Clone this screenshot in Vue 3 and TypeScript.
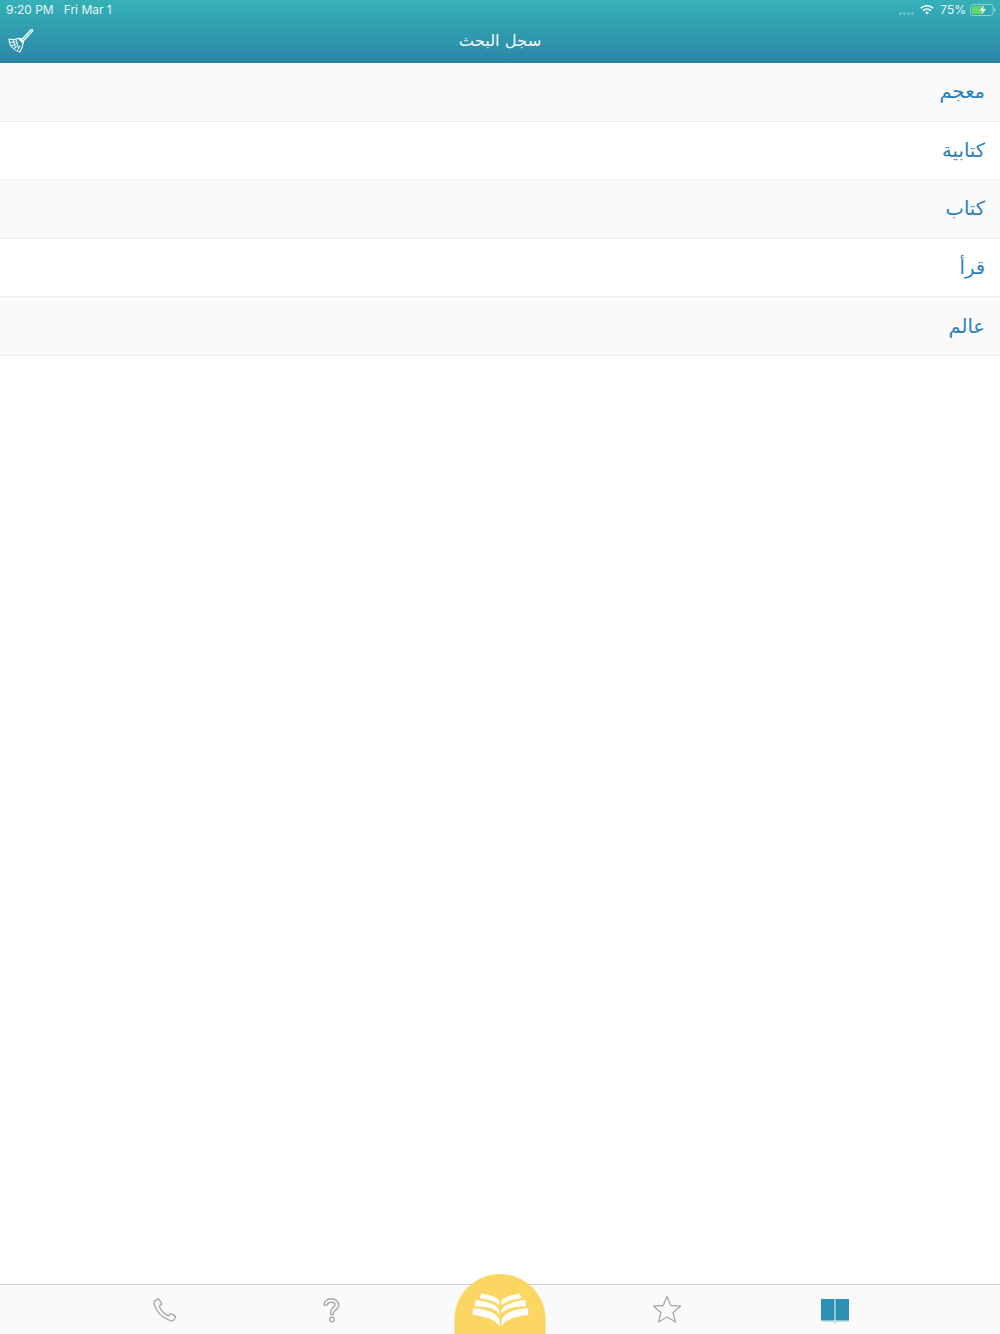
<script setup lang="ts">
const rows: string[] = ['معجم', 'كتابية', 'كتاب', 'قرأ', 'عالم']
</script>

<template>
  <div class="page">
    <header class="header">
      <div class="status">
        <div class="status-left"><span>9:20 PM</span><span>Fri Mar 1</span></div>
        <div class="status-right">
          <span class="signal"><i></i><i></i><i></i><i></i></span>
          <svg class="wifi" viewBox="0 0 16 12" width="14" height="11">
            <path d="M1 4.600a10 10 0 0 1 14 0" fill="none" stroke="#fff" stroke-width="1.900" />
            <path d="M3.600 7.200a6.400 6.400 0 0 1 8.800 0" fill="none" stroke="#fff" stroke-width="1.900" />
            <path d="M8 11.800 5.800 9.500a3.100 3.100 0 0 1 4.400 0z" fill="#fff" />
          </svg>
          <span class="pct">75%</span>
          <svg class="battery" viewBox="0 0 26 12" width="26" height="12">
            <rect x="0.500" y="0.500" width="22.500" height="11" rx="2.600" fill="none" stroke="#8fd0cb" stroke-width="1" />
            <rect x="2" y="2" width="11" height="8" rx="1" fill="#62d868" />
            <path d="M24 4v4c1 0 1.500-.9 1.500-2S25 4 24 4z" fill="#8fd0cb" />
            <path d="M14 1.200 9.800 6.800h2.800l-1 4L16 5h-2.900z" fill="#fff" />
          </svg>
        </div>
      </div>
      <div class="nav">
        <svg class="broom" viewBox="8 27 26 26" width="26" height="26" fill="none" stroke="#fff" stroke-width="1.100" stroke-linejoin="round" stroke-linecap="round">
          <path d="M21 40.500 30.800 30c.5-.5 1.200-.6 1.600-.2.400.4.300 1.100-.2 1.600L22.400 42" stroke-width="1.300" />
          <path d="M18.600 38.600c1.800-.6 3.800.9 4.800 3 .4.800.2 1.500-.2 1.800z" fill="#fff" />
          <path d="M18 38.400C15.500 39.500 12 39.800 9 39c.3 3.300 1 6 2.800 8 2 2.300 4.800 4 8 5 1.900-2.700 3-6 3.400-9.400" />
          <path d="M10.300 42.300c1.800.2 3.500 0 5-.7M11.500 45.300c2 0 3.600-.6 5-1.700M14 48.300c1.400-.5 2.900-1.600 3.800-3M17 50.500c1.200-.9 2.500-2.800 3-4.500M13 40l2.500 7.500M16 39.500l2.500 9" stroke-width="1" />
        </svg>
        <span class="title">سجل البحث</span>
      </div>
    </header>

    <main class="list">
      <div v-for="(row, i) in rows" :key="row" class="row" :class="{ odd: i % 2 === 0 }">{{ row }}</div>
    </main>

    <footer class="tabbar">
      <div class="tab phone">
        <svg viewBox="0 0 24 24" width="24" height="24" fill="none" stroke="#a8a8a8" stroke-width="1.400" stroke-linejoin="round">
          <path d="M2.300 2.600 4.700 1.100c.5-.3 1-.2 1.300.3l2.400 3.700c.3.500.2 1-.2 1.300L6.600 7.700c-.3.300-.4.600-.2 1 1.800 3.800 4.700 7 8.500 9 .4.200.8.100 1-.2l1.300-1.500c.4-.4.900-.5 1.400-.2l3.500 2.400c.5.300.5.900.2 1.300L21 21.600c-.9 1.100-2.300 1.500-3.700 1C8.500 19.500 3 13.500 1 5.300.8 4.300 1.400 3.200 2.300 2.600z" />
        </svg>
      </div>
      <div class="tab question">
        <svg viewBox="0 0 17 25" width="17" height="25" fill="none" stroke="#a8a8a8" stroke-width="1.400" stroke-linejoin="round">
          <path d="M1 7.300C1 3.500 4 .8 8.300.8c4.300 0 7.500 2.700 7.500 6.200 0 2.300-1.300 3.700-3 4.800-1.300.9-2.200 1.600-2.400 3.300l-.1 1.500H7.900l-.2-2.300c-.2-2.600 1-3.800 2.400-4.900 1.200-.9 2-1.500 2-2.700 0-1.500-1.600-2.500-3.700-2.500-2 0-3.800 1-4.300 2.800z" />
          <circle cx="9" cy="21.500" r="2.200" />
        </svg>
      </div>
      <div class="tab center">
        <div class="bump">
          <svg viewBox="0 0 58 34" width="58" height="34" fill="#fff">
            <path d="M9.700.5c6.500 1.200 14.500 2.300 18.300 7.500v4.500C24 8 16 6.500 8.300 5.300z" />
            <path d="M48.300.5C41.800 1.700 33.800 2.800 30 8v4.500C34 8 42 6.500 49.700 5.300z" />
            <path d="M4.300 7c8.500 1 19.500 2.800 23.700 10v4c-5-6.500-14-7.500-24.700-7.800z" />
            <path d="M53.700 7c-8.500 1-19.500 2.800-23.700 10v4c5-6.500 14-7.500 24.700-7.800z" />
            <path d="M1.300 15.300C13 15.800 24 18.500 28 26.500V33.700C24.500 26.500 13 22.800 1.300 22z" />
            <path d="M56.700 15.300C45 15.800 34 18.500 30 26.500V33.700C33.500 26.500 45 22.800 56.700 22z" />
          </svg>
        </div>
      </div>
      <div class="tab star">
        <svg viewBox="0 0 30 28" width="30" height="28" fill="none" stroke="#a8a8a8" stroke-width="1.300" stroke-linejoin="round">
          <path d="M15 1.500 18.800 10.500 28.500 11.200 21 17.500 23.500 27 15 22 6.500 27 9 17.500 1.500 11.200 11.200 10.500z" />
        </svg>
      </div>
      <div class="tab">
        <svg viewBox="0 0 30 26" width="30" height="26" fill="#2a91b3">
          <path d="M1 1h13.500v21.500H1z" />
          <path d="M15.500 1H29v21.500H15.500z" />
          <path d="M1 22.500h13l1 2.500 1-2.500h13v1H16.800l-1.800 2-1.800-2H1z" fill="#8cc8db" />
        </svg>
      </div>
    </footer>
  </div>
</template>

<style scoped>
.page {
  width: 1000px;
  height: 1334px;
  display: flex;
  flex-direction: column;
  background: #fff;
  font-family: "DejaVu Sans", sans-serif;
  overflow: hidden;
}
.header {
  height: 63px;
  flex: none;
  background: linear-gradient(#35b1b7, #2b87a7);
  color: #fff;
  display: flex;
  flex-direction: column;
  border-bottom: 1px solid #2b82a3;
  box-sizing: border-box;
}
.status {
  height: 20px;
  flex: none;
  display: flex;
  justify-content: space-between;
  align-items: center;
  padding: 0 4px 1px 6px;
  box-sizing: border-box;
  font: 12px Inter, "Liberation Sans", sans-serif;
  color: #e8f6f6;
}
.status-left { display: flex; gap: 10px; }
.status-right { display: flex; align-items: center; gap: 4px; }
.signal { display: flex; gap: 1px; margin-right: 2px; margin-top: 7px; }
.signal i { width: 3px; height: 3px; border-radius: 50%; background: rgba(255,255,255,.3); }
.pct { font-size: 12px; margin-left: 2px; }
.nav {
  position: relative;
  flex: 1;
  display: flex;
  align-items: center;
  justify-content: center;
  padding-bottom: 2px;
}
.broom { position: absolute; left: 8px; top: 7px; }
.title { font-size: 16.300px; font-weight: 400; color: #f2fafa; }
.list { flex: 1; direction: rtl; }
.row {
  height: 58.600px;
  box-sizing: border-box;
  display: flex;
  align-items: center;
  padding-right: 15px;
  font-size: 19.500px;
  color: #2d7fb9;
  border-bottom: 1px solid #f0f0f0;
}
.row.odd { background: #fafafa; }
.tabbar {
  position: relative;
  height: 50px;
  flex: none;
  background: #fafafa;
  border-top: 1px solid #cfcfcf;
  box-sizing: border-box;
  display: grid;
  grid-template-columns: repeat(5, 167.500px);
  justify-content: center;
  align-items: center;
}
.tab { display: flex; justify-content: center; align-items: center; padding-top: 3px; }
.phone { padding-top: 1px; }
.question { padding-top: 1px; padding-right: 2px; }
.star { padding-top: 0; padding-right: 1px; margin-top: -1px; }
.center { align-self: stretch; position: relative; padding-top: 0; }
.bump {
  position: absolute;
  left: 50%;
  transform: translateX(-50%);
  bottom: 0;
  width: 91px;
  height: 60px;
  background: #fbd662;
  border-radius: 45.500px 45.500px 0 0;
  display: flex;
  justify-content: center;
  padding-top: 19px;
  box-sizing: border-box;
}
</style>
